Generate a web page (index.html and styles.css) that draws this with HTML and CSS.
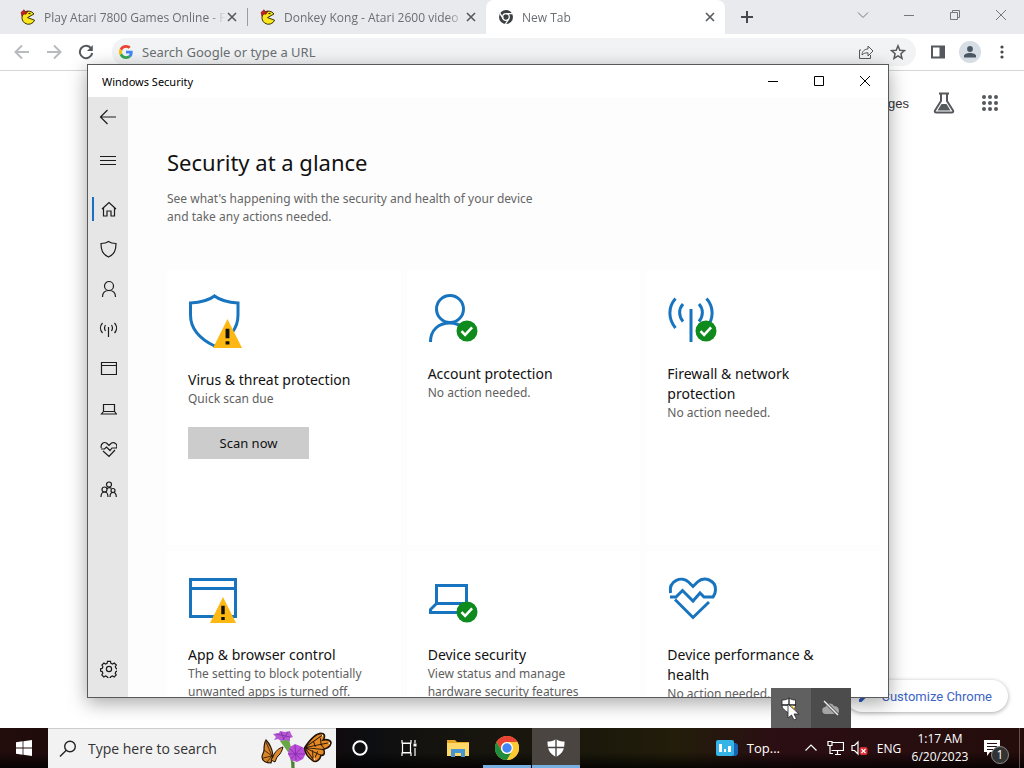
FILE: index.html
```html
<!DOCTYPE html>
<html lang="en">
<head>
<meta charset="utf-8">
<title>Windows Security</title>
<link rel="stylesheet" href="styles.css">
</head>
<body>
<svg class="defs" width="0" height="0" aria-hidden="true">
  <defs>
    <symbol id="pac" viewBox="0 0 16 16">
      <path d="M14 5 7.500 8.600 14.600 11.200A6.600 6.600 0 1 1 14 5Z" fill="#f8e71c" stroke="#3a3008" stroke-width="1"/>
      <path d="M1 3.500 4 .8 5.500 2.800 8 2 6 5.200 3.800 5 2 7.200Z" fill="#c3261c" stroke="#5c100b" stroke-width=".6"/>
      <path d="M8.500 4.500h2" stroke="#2b2508" stroke-width="1.300"/>
    </symbol>
    <symbol id="x" viewBox="0 0 10 10"><path d="M1 1 9 9M9 1 1 9" stroke="currentColor" stroke-width="1.600" fill="none"/></symbol>
    <symbol id="warn" viewBox="0 0 30 30">
      <path d="M15 0 30 30H0Z" fill="#fdb813"/><path d="M13 10h4v10h-4zM13 23h4v3.500h-4z" fill="#111"/>
    </symbol>
    <symbol id="ok" viewBox="0 0 22 22">
      <circle cx="11" cy="11" r="10.500" fill="#0f8a1c"/><path d="m5.500 11.200 3.600 3.600 7-7.400" fill="none" stroke="#fff" stroke-width="2.600"/>
    </symbol>
    <symbol id="wing" viewBox="0 0 26 30">
      <path d="M1 18C5 8 10 1 15 1c3 0 3 4 2 6 4-2 8-1 8 2 0 4-4 6-6 7 3 2 2 6-1 6 0 4-3 8-6 7C7 27 2 23 1 18Z" fill="#e58a23" stroke="#22140c" stroke-width="1.600"/>
      <path d="M1 18 15 3M1 18 22 9M1 18l18-2M1 18l17 4M1 18l11 10M8 10l3 5M14 6l2 6 4 3M9 19l2 7M14 19l-1 6" fill="none" stroke="#2a170d" stroke-width=".9"/>
      <path d="M15 3h1M23 9h1M12 27h1" stroke="#fff" stroke-width="1.400"/>
    </symbol>
  </defs>
</svg>

<div class="desktop">
  <section class="browser" aria-label="Browser">
    <div class="tabstrip">
      <div class="tab"><svg class="fav"><use href="#pac"/></svg><span class="tab-title">Play Atari 7800 Games Online - F</span><button class="tab-x" aria-label="Close tab"><svg><use href="#x"/></svg></button></div>
      <div class="tab divided"><svg class="fav"><use href="#pac"/></svg><span class="tab-title">Donkey Kong - Atari 2600 video</span><button class="tab-x" aria-label="Close tab"><svg><use href="#x"/></svg></button></div>
      <div class="tab active">
        <svg class="fav" viewBox="0 0 16 16"><circle cx="8" cy="8" r="7" fill="#3c4043"/><circle cx="8" cy="8" r="3.300" fill="#3c4043" stroke="#fff" stroke-width="1.300"/><path d="M8 4.700h6.800M5.100 9.600 2 4.300M10.900 9.600 7.500 15" stroke="#fff" stroke-width="1.300"/></svg>
        <span class="tab-title">New Tab</span><button class="tab-x" aria-label="Close tab"><svg><use href="#x"/></svg></button></div>
      <button class="new-tab" aria-label="New tab"><svg width="12" height="12" viewBox="0 0 12 12"><path d="M6 0v12M0 6h12" stroke="#45494d" stroke-width="2"/></svg></button>
      <div class="caption">
        <button aria-label="Search tabs"><svg width="12" height="12" viewBox="0 0 12 12"><path d="m1 3.500 5 5 5-5"/></svg></button>
        <button aria-label="Minimize"><svg width="12" height="12" viewBox="0 0 12 12"><path d="M1 6.500h10"/></svg></button>
        <button aria-label="Restore"><svg width="12" height="12" viewBox="0 0 12 12"><path d="M1.500 3.500h7v7h-7zM3.500 3.500v-2h7v7h-2"/></svg></button>
        <button aria-label="Close"><svg width="12" height="12" viewBox="0 0 12 12"><path d="m1 1 10 10M11 1 1 11"/></svg></button>
      </div>
    </div>
    <div class="toolbar">
      <button class="tool dim" aria-label="Back"><svg width="16" height="16" viewBox="0 0 16 16"><path d="M15 8H2M8 1.500 1.500 8 8 14.500"/></svg></button>
      <button class="tool dim" aria-label="Forward"><svg width="16" height="16" viewBox="0 0 16 16"><path d="M1 8h13M8 1.500 14.500 8 8 14.500"/></svg></button>
      <button class="tool" aria-label="Reload"><svg width="16" height="16" viewBox="0 0 16 16"><path d="M13.200 4.500A6.200 6.200 0 1 0 14.200 9"/><path d="M14.800 1v6H9Z" fill="currentColor" stroke="none"/></svg></button>
      <div class="omnibox">
        <svg width="14" height="14" viewBox="0 0 48 48" aria-hidden="true"><path fill="#EA4335" d="M24 9.500c3.540 0 6.710 1.220 9.210 3.600l6.850-6.850C35.900 2.380 30.470 0 24 0 14.620 0 6.510 5.380 2.560 13.220l7.980 6.190C12.430 13.720 17.740 9.500 24 9.500z"/><path fill="#4285F4" d="M46.980 24.550c0-1.570-.15-3.090-.38-4.550H24v9.020h12.940c-.58 2.960-2.260 5.480-4.780 7.180l7.730 6c4.510-4.180 7.090-10.360 7.090-17.650z"/><path fill="#FBBC05" d="M10.530 28.590c-.48-1.450-.76-2.990-.76-4.590s.27-3.140.76-4.590l-7.980-6.190C.92 16.460 0 20.120 0 24s.92 7.540 2.560 10.780l7.970-6.190z"/><path fill="#34A853" d="M24 48c6.480 0 11.930-2.130 15.890-5.810l-7.730-6c-2.150 1.450-4.920 2.300-8.160 2.300-6.260 0-11.570-4.220-13.470-9.910l-7.980 6.190C6.510 42.620 14.620 48 24 48z"/></svg>
        <input type="text" aria-label="Address bar" placeholder="Search Google or type a URL">
        <button class="tool" aria-label="Share"><svg class="thin" width="16" height="16" viewBox="0 0 16 16"><path d="M3 6H1.500v8.500h11V11M4 11c0-4 3-6 6-6V2l5 5-5 5V8.800c-3 0-4.500.6-6 2.200Z"/></svg></button>
        <button class="tool" aria-label="Bookmark"><svg class="star" width="16" height="16" viewBox="0 0 16 16"><path d="m8 1.800 1.800 4.400 4.700.4-3.600 3.100 1.100 4.600L8 11.800l-4 2.500 1.100-4.600L1.500 6.600l4.700-.4Z"/></svg></button>
      </div>
      <button class="tool" aria-label="Side panel"><svg width="16" height="16" viewBox="0 0 16 16"><path d="M2 2.500h12v11H2z"/><path d="M9.500 2h5v12h-5z" fill="currentColor" stroke="none"/></svg></button>
      <button class="avatar" aria-label="Profile"><svg width="14" height="14" viewBox="0 0 14 14"><circle cx="7" cy="4" r="2.900" fill="#4a5763"/><path d="M1 12.500v-1.700c0-1.900 3-2.900 6-2.900s6 1 6 2.900v1.700Z" fill="#4a5763"/></svg></button>
      <button class="tool" aria-label="Menu"><svg width="16" height="16" viewBox="0 0 16 16"><g fill="#45494d" stroke="none"><circle cx="8" cy="3" r="1.600"/><circle cx="8" cy="8" r="1.600"/><circle cx="8" cy="13" r="1.600"/></g></svg></button>
    </div>
    <div class="newtab-page">
      <header class="ntp-head">
        <a href="#images">Images</a>
        <button aria-label="Labs"><svg width="22" height="22" viewBox="0 0 22 22"><path d="M6 1.500h10M8 2v7L2 18.500c-.6 1.200 0 2 1.200 2h15.600c1.200 0 1.800-.8 1.200-2L14 9V2" fill="none" stroke="#55595d" stroke-width="2"/><path d="m8.500 12h5l4 6.500h-13Z" fill="#55595d"/></svg></button>
        <button aria-label="Google apps"><svg width="18" height="18" viewBox="0 0 18 18"><g fill="#55595d"><circle cx="3" cy="3" r="2"/><circle cx="9" cy="3" r="2"/><circle cx="15" cy="3" r="2"/><circle cx="3" cy="9" r="2"/><circle cx="9" cy="9" r="2"/><circle cx="15" cy="9" r="2"/><circle cx="3" cy="15" r="2"/><circle cx="9" cy="15" r="2"/><circle cx="15" cy="15" r="2"/></g></svg></button>
      </header>
      <button class="customize"><svg width="14" height="14" viewBox="0 0 14 14"><path d="M1 10.500 9 2.500l2.500 2.500-8 8H1ZM10 1.500l1-1 2.500 2.500-1 1Z" fill="#2f5bc4"/></svg>Customize Chrome</button>
    </div>
  </section>

  <section class="window" aria-label="Windows Security">
    <header class="titlebar">
      <span>Windows Security</span>
      <div class="win-buttons">
        <button aria-label="Minimize"><svg width="12" height="12" viewBox="0 0 12 12"><path d="M1 6.500h10"/></svg></button>
        <button aria-label="Maximize"><svg width="12" height="12" viewBox="0 0 12 12"><path d="M1.500 1.500h9v9h-9z"/></svg></button>
        <button aria-label="Close"><svg width="12" height="12" viewBox="0 0 12 12"><path d="m1 1 10 10M11 1 1 11"/></svg></button>
      </div>
    </header>
    <div class="win-body">
      <nav class="side" aria-label="Security areas">
        <button aria-label="Back"><svg viewBox="0 0 18 18"><path d="M17 9H1.500M8.500 2l-7 7 7 7"/></svg></button>
        <button class="menu" aria-label="Menu"><svg viewBox="0 0 18 18"><path d="M1 4.500h16M1 8.500h16M1 12.500h16"/></svg></button>
        <button class="current" aria-label="Home"><svg viewBox="0 0 18 18"><path d="m3 9 7-6.500L17 9M4.500 8v8H8v-5h4v5h3.500V8"/></svg></button>
        <button aria-label="Virus and threat protection"><svg viewBox="0 0 18 18"><path d="M9.500 1.500c2 1.500 4.500 2 7.500 2 0 7-1.500 10.500-7.500 13.500-6-3-7.500-6.500-7.500-13.500 3 0 5.500-.5 7.500-2Z"/></svg></button>
        <button aria-label="Account protection"><svg viewBox="0 0 18 18"><circle cx="10" cy="6" r="4.500"/><path d="M3.500 17c0-4.500 3-6.500 6.500-6.500s6.500 2 6.500 6.500"/></svg></button>
        <button aria-label="Firewall"><svg viewBox="0 0 18 18"><path d="M9.500 7v10M6.500 5c-1.300 2-1.300 4 0 6M3.500 3c-2.700 3-2.700 7 0 10M12.500 5c1.300 2 1.300 4 0 6M15.500 3c2.700 3 2.700 7 0 10"/></svg></button>
        <button aria-label="App and browser control"><svg viewBox="0 0 18 18"><path d="M2.500 2.500h15v12h-15zM2.500 5.500h15"/></svg></button>
        <button aria-label="Device security"><svg viewBox="0 0 18 18"><path d="M4.500 4.500h11v7h-11zM4.500 11.500l-2 2.500h15l-2-2.500"/></svg></button>
        <button aria-label="Device performance"><svg viewBox="0 0 18 18"><path d="M2.300 8C1.300 4 4.500 1.500 7.500 3L10 5.500 12.500 3c3-1.500 6.500 1.500 5 5H13l-2 2.500L7.500 7l-2 2H2M4 11l6 5.500L16 10"/></svg></button>
        <button aria-label="Family options"><svg viewBox="0 0 18 18"><circle cx="10" cy="4.500" r="2.500"/><circle cx="5.500" cy="9.500" r="2.500"/><circle cx="14" cy="10.500" r="2"/><path d="M2 17c0-3 1.500-5 3.500-5S9 14 9 17M11 17c0-2.500 1-4.500 3-4.500s3.300 2 3.300 4.500M8 9c1-1.500 3-2 4.500-.5"/></svg></button>
        <button class="gear" aria-label="Settings"><svg viewBox="0 0 18 18"><g transform="translate(1 0)"><circle cx="9" cy="9" r="2.600"/><path d="m7.500 1.300 3 0 .4 2 1.700.7L14.300 3l2 2-1 1.700.7 1.600 1.200.5v2.400l-1.400.5-.6 1.700 1 1.600-2 2-1.700-1-1.700.7-.5 1.500H7.700l-.5-1.600-1.700-.7-1.700 1-2-2 1-1.700-.6-1.600-1.600-.5V8.800l1.700-.5.6-1.600-1-1.700 2-2 1.600 1 1.600-.7Z"/></g></svg></button>
      </nav>
      <main class="main">
        <h1>Security at a glance</h1>
        <p class="intro">See what's happening with the security and health of your device and take any actions needed.</p>
        <div class="cards">
          <article class="card">
            <svg class="pic" width="56" height="54" viewBox="0 0 56 54"><path d="M26.500 2c6.500 5 14 6.500 23.500 7v12c0 14-9 24-23.500 31C12 45 2.500 35 2.500 21V9c9.500-.5 17.500-2 24-7Z" class="line"/><use href="#warn" x="25" y="25" width="29" height="29"/></svg>
            <h2>Virus &amp; threat protection</h2><p>Quick scan due</p>
            <button class="action">Scan now</button>
          </article>
          <article class="card">
            <svg class="pic" width="52" height="48" viewBox="0 0 52 48"><circle cx="22" cy="15" r="13.500" class="line"/><path d="M2.500 48c0-12 8-19 19.500-19 6 0 10 2 13 5" class="line"/><use href="#ok" x="28" y="26" width="22" height="22"/></svg>
            <h2>Account protection</h2><p>No action needed.</p>
          </article>
          <article class="card">
            <svg class="pic" width="52" height="48" viewBox="0 0 52 48"><path d="M24 15v33M8.500 4.500C1 13 1 25 8.500 34M16 10c-4.500 5-4.500 12 0 17.500M39.500 4.500C47 13 47 25 39.500 34M32 10c4.500 5 4.500 12 0 17.500" class="line"/><use href="#ok" x="28" y="26" width="22" height="22"/></svg>
            <h2>Firewall &amp; network protection</h2><p>No action needed.</p>
          </article>
          <article class="card">
            <svg class="pic" width="52" height="48" viewBox="0 0 52 48"><path d="M2.500 4.500h45v37h-45zM2.500 13.500h45" class="line"/><use href="#warn" x="22" y="22" width="26" height="26"/></svg>
            <h2>App &amp; browser control</h2><p>The setting to block potentially unwanted apps is turned off.</p>
          </article>
          <article class="card">
            <svg class="pic" width="52" height="48" viewBox="0 0 52 48"><path d="M8.500 10.500h30v18h-30zM8.500 28.500l-6 6v3H38V28.500" class="line"/><use href="#ok" x="28" y="26" width="22" height="22"/></svg>
            <h2>Device security</h2><p>View status and manage hardware security features</p>
          </article>
          <article class="card">
            <svg class="pic" width="52" height="48" viewBox="0 0 52 48"><path d="M3.500 18C1.500 5 15 1 21.500 7L26 11.500 30.500 7C37 1 49 5 48.500 15c0 3-1 5-2.500 7H37l-4-4-7 8L15.500 15.500 9 22H3M8 24.500l18 18L42 27" class="line"/></svg>
            <h2>Device performance &amp; health</h2><p>No action needed.</p>
          </article>
        </div>
      </main>
    </div>
  </section>

  <div class="tray-popup">
    <button class="hover" aria-label="Windows Security"><svg width="26" height="26" viewBox="0 0 22 26"><path d="M9 3c2 1.500 4 2 6.500 2v5c0 4-3 6-6.500 8-3.500-2-7-4-7-8V5c3 0 5-.5 7-2Z" fill="#fff" stroke="#222" stroke-width=".8"/><path d="M9 3v15M2 10h14" stroke="#222" stroke-width="1.300"/><path d="m12 10 4 6h-6Z" fill="#f5cc1b"/><path d="M8 9v14l3.500-3 2.500 5 2.500-1.200L14 19h5Z" fill="#fff" stroke="#222" stroke-width=".8"/></svg></button>
    <button aria-label="OneDrive"><svg width="18" height="16" viewBox="0 0 18 16"><path d="M4 14a3.500 3.500 0 0 1-.5-7C4 3 10 2 12 6c4 0 5 3 5 5s-1 3-3 3Z" fill="#a5a5a5"/><path d="m2 1 14 14" stroke="#4c4c4c" stroke-width="3"/><path d="m2 1 14 14" stroke="#eee" stroke-width="1.400"/></svg></button>
  </div>

  <footer class="taskbar">
    <button class="start" aria-label="Start"><svg width="16" height="16" viewBox="0 0 16 16"><path d="M0 2.300 6.600 1.300v6.300H0ZM7.400 1.200 16 0v7.600H7.400ZM0 8.400h6.600v6.300L0 13.700ZM7.400 8.400H16V16l-8.600-1.200Z" fill="#fff"/></svg></button>
    <label class="search">
      <svg width="18" height="18" viewBox="0 0 18 18"><circle cx="11" cy="6.500" r="5.300" fill="none" stroke="#222" stroke-width="1.400"/><path d="M7.300 10.300 1 16.600" stroke="#222" stroke-width="1.400"/></svg>
      <input type="text" aria-label="Search" placeholder="Type here to search">
      <svg class="butterfly" width="74" height="38" viewBox="0 0 74 38">
        <path d="M24 14c5 5 7 12 8 24" fill="none" stroke="#5c9440" stroke-width="2.500"/>
        <path d="m19 11 9-2 2 9-3 4Z" fill="#69a646"/>
        <path d="m12 4 6-1 1-2 5 1 5-1 1 3 2 3-3 1 0 3-5-1-4 1-3-2-4 1 2-3Z" fill="#b558d3"/>
        <path d="m15 4 14 3M20 2l3 8M27 2l-5 8" stroke="#7c2ca5" stroke-width=".8"/>
        <path d="m29 17 5-3 5 2 4 2 2 5-3 6-6 3-6-2-3-6Z" fill="#b94fd6"/>
        <path d="m29 19 11 10M34 15l1 15M41 17 30 29M27 24h17" stroke="#7f2ba6" stroke-width=".8"/>
        <path d="M32 32v6" stroke="#4b8234" stroke-width="3"/>
        <g transform="rotate(12 58 17)"><use href="#wing" x="43" y="2" width="27" height="31"/></g>
        <path d="M5 10c4 4 6 9 7 15l-2 8C5 33 1 31 1 27c0-3 2-4 2-7 0-4 0-7 2-10Z" fill="#d98529" stroke="#25160c" stroke-width="1.200"/>
        <path d="M5 12 11 26M3 20l8 6M2 28l9-2M6 32l5-6" stroke="#2a170d" stroke-width=".8"/>
        <path d="M12 27c2-6 6-9 10-10-1 4-3 8-6 10l-2 5-4-2Z" fill="#dc8a2e" stroke="#25160c"/>
      </svg>
    </label>
    <div class="apps">
      <button aria-label="Cortana"><svg width="18" height="18" viewBox="0 0 18 18"><circle cx="9" cy="9" r="6.700" fill="none" stroke="#fff" stroke-width="2"/></svg></button>
      <button aria-label="Task view"><svg width="18" height="18" viewBox="0 0 18 18"><path d="M2 1v3h9V1M2 17v-3h9v3M2.500 4.500h8v9h-8zM15 1v3M15 9v8" fill="none" stroke="#fff" stroke-width="1.200"/><path d="M13.500 4.500h3v3h-3z" fill="#fff"/></svg></button>
      <button aria-label="File Explorer"><svg width="22" height="18" viewBox="0 0 22 18"><path d="M0 1h8l2 2h12v14H0Z" fill="#e8a827"/><path d="M0 4h22v13H0Z" fill="#ffd867"/><path d="M4 10h14v8h-4v-4H8v4H4Z" fill="#4796d1"/></svg></button>
      <button class="open" aria-label="Chrome"><svg width="24" height="24" viewBox="0 0 24 24"><circle cx="12" cy="12" r="12" fill="#fcc934"/><path d="M1.600 6A12 12 0 0 1 22.400 6H12a6 6 0 0 0-5.200 9Z" fill="#ea4335"/><path d="M1.600 6A12 12 0 0 0 12 24l5.200-9A6 6 0 0 1 6.800 15Z" fill="#1e8e3e"/><path d="M22.400 6A12 12 0 0 1 12 24l5.200-9A6 6 0 0 0 12 6Z" fill="#fcc934"/><circle cx="12" cy="12" r="6" fill="#fff"/><circle cx="12" cy="12" r="4.700" fill="#4285f4"/></svg></button>
      <button class="open focus" aria-label="Windows Security"><svg width="18" height="18" viewBox="0 0 18 18"><path d="M9 0c2.500 2 5 2.600 8.500 2.600C17.500 10 16 14.500 9 18 2 14.500.5 10 .5 2.600 4 2.600 6.500 2 9 0Z" fill="#fff"/><path d="M9 0v18M0 8.500h18" stroke="#4a4540" stroke-width="1.400"/></svg></button>
    </div>
    <div class="tray">
      <button class="news"><svg width="22" height="18" viewBox="0 0 22 18"><path d="M17 4h3l2 2v9l-2 2h-3Z" fill="#1665b5"/><rect y="1" width="18" height="16" rx="2" fill="#35b4e8"/><path d="M3 5h3v8H3zM8 10h2v3H8zM12 7h3v6h-3z" fill="#fff"/></svg><span>Top...</span></button>
      <button aria-label="Show hidden icons"><svg width="14" height="14" viewBox="0 0 14 14"><path d="m1.500 9.500 5.500-5.500 5.500 5.500"/></svg></button>
      <button aria-label="Network"><svg width="17" height="16" viewBox="0 0 17 16"><path d="M4.500 2.500h12v8h-12M8 14.500h6M10.500 10.500v4M1 1.500h4v4H1zM3 5.500v8h3"/></svg></button>
      <button aria-label="Volume muted"><svg width="17" height="16" viewBox="0 0 17 16"><path d="M1 5.500h2.500L7 2v12l-3.500-3.500H1Z"/><rect x="8.500" y="7" width="8" height="8" rx="2" fill="#d92b35" stroke="none"/><path d="m10.500 9 4 4M14.500 9l-4 4"/></svg></button>
      <button class="lang">ENG</button>
      <button class="clock"><span>1:17 AM</span><span>6/20/2023</span></button>
      <button class="notes" aria-label="1 new notification"><svg width="16" height="16" viewBox="0 0 16 16"><path d="M0 0h16v12H6l-3 4v-4H0Z" fill="#fff" stroke="none"/><path d="M3 3.500h10M3 6.500h10M3 9.500h6" stroke="#25100f"/></svg><span class="badge">1</span></button>
    </div>
  </footer>
</div>
</body>
</html>
```
FILE: styles.css
```css
* { box-sizing: border-box; }
body { margin: 0; font-family: "Noto Sans", "Open Sans", sans-serif; font-size: 12px; color: #111; }
button { border: 0; padding: 0; background: none; font: inherit; color: inherit; display: flex; align-items: center; justify-content: center; }
input { border: 0; padding: 0; background: none; font: inherit; min-width: 0; outline: 0; }
h1, h2, p { margin: 0; font-weight: 400; }
svg { flex: none; display: block; }
.defs { position: absolute; }
.desktop { position: relative; display: flex; flex-direction: column; height: 100vh; overflow: hidden; }

.browser { flex: 1; display: flex; flex-direction: column; background: #fff; }
.tabstrip { display: flex; height: 34px; padding-left: 8px; background: #e8eaed; font-family: "Open Sans", sans-serif; }
.tab { flex: 0 1 239px; display: flex; align-items: center; padding: 0 9px 0 12px; color: #6a6e73; min-width: 0; }
.divided { border-left: 1px solid #9a9da1; border-image: linear-gradient(transparent 24%, #9a9da1 24%, #9a9da1 76%, transparent 76%) 1; }
.tab.active { background: #fff; border-radius: 8px 8px 0 0; }
.fav { width: 16px; height: 16px; margin-right: 8px; }
.tab-title { flex: 1; overflow: hidden; white-space: nowrap; mask-image: linear-gradient(90deg, #000 90%, transparent); }
.tab-x { width: 12px; color: #55595d; }
.tab-x svg { width: 10px; height: 10px; }
.new-tab { width: 44px; }
.caption { display: flex; margin-left: auto; padding-bottom: 5px; }
.caption button { width: 46px; }
.caption svg, .win-buttons svg { fill: none; stroke: #777; }
.toolbar { display: flex; align-items: center; gap: 4px; height: 37px; padding: 0 8px; border-bottom: 1px solid #d5d6d8; }
.tool { width: 28px; height: 28px; color: #55595d; }
.tool svg { fill: none; stroke: currentColor; stroke-width: 2; }
.tool .thin { stroke-width: 1; }
.tool .star { stroke-width: 1.5; }
.dim { color: #b8babd; }
.omnibox { flex: 1; display: flex; align-items: center; gap: 4px; height: 28px; margin: 0 4px 0 8px; padding: 0 4px 0 7px; border-radius: 14px; background: #f1f3f4; font-size: 13px; }
.omnibox input { flex: 1; margin-left: 5px; }
.omnibox input::placeholder { color: #6b6f73; opacity: 1; }
.avatar { border-radius: 50%; background: #d6dde4; width: 22px; height: 22px; margin: 0 3px; }
.newtab-page { position: relative; flex: 1; }
.ntp-head { display: flex; justify-content: flex-end; align-items: center; gap: 24px; height: 64px; padding-right: 23px; }
.ntp-head a { color: #333; text-decoration: none; font-family: "Liberation Sans", Arial, sans-serif; font-size: 13px; }
.ntp-head button { min-width: 22px; }
.customize { position: absolute; right: 16px; bottom: 16px; height: 32px; gap: 9px; padding: 0 16px 0 12px; border-radius: 16px; background: #fff; color: #3c64c4; font-family: Roboto, sans-serif; font-size: 13px; box-shadow: 0 1px 4px rgba(0, 0, 0, .35); }

.window { position: absolute; left: 87px; top: 64px; right: 135px; bottom: 70px; display: flex; flex-direction: column; border: 1px solid #58595b; background: #fff; box-shadow: 0 5px 18px rgba(0, 0, 0, .35); }
.titlebar { display: flex; align-items: center; justify-content: space-between; height: 32px; padding-left: 14px; font-size: 11px; color: #000; }
.win-buttons { display: flex; height: 32px; }
.win-buttons button { width: 46px; }
.win-buttons svg { stroke: #000; }
.win-body { flex: 1; display: flex; min-height: 0; overflow: hidden; }
.side { width: 40px; display: flex; flex-direction: column; padding-bottom: 8px; background: #e6e6e6; }
.side button { height: 40px; width: 100%; }
.side svg { width: 18px; height: 18px; fill: none; stroke: #1c1c1c; stroke-width: 1.2; }
.side .menu { margin: 4px 0 8px; }
.side .current { background: linear-gradient(#1a6fc0, #1a6fc0) 4px center / 2px 24px no-repeat; }
.side .gear { margin-top: auto; }
.main { flex: 1; padding: 49px 8px 0 39px; background: #fdfdfd; overflow: hidden; }
h1 { font-size: 22px; line-height: 32px; }
.intro { max-width: 380px; margin-top: 12px; font-size: 12px; line-height: 18px; color: #666; }
.cards { display: grid; grid-template-columns: repeat(3, 1fr); grid-auto-rows: 275px; gap: 6px; margin-top: 44px; }
.card { padding: 24px 20px 0 21px; background: #fff; }
.pic { margin-bottom: 22px; }
.line { fill: none; stroke: #1874bf; stroke-width: 3; }
h2 { max-width: 176px; font-size: 14px; line-height: 20px; }
.card p { font-size: 12px; line-height: 18px; color: #606060; }
.action { width: 121px; height: 32px; margin-top: 19px; background: #ccc; font-size: 13px; }

.tray-popup { position: absolute; right: 173px; bottom: 40px; display: flex; background: #4c4c4c; }
.tray-popup button { width: 40px; height: 40px; }
.tray-popup .hover { background: #606060; }

.taskbar { display: flex; height: 40px; color: #fff; background: linear-gradient(transparent 60%, rgba(0, 0, 0, .8)), linear-gradient(90deg, #220c0c 0, #140808 30%, #0d0e12 36%, #15130f 42%, #1b190b 58%, #231d0a 66%, #2b0e14 76%, #240d0b 100%); font-family: "Open Sans", sans-serif; }
.start { width: 48px; }
.search { flex: 0 1 288px; display: flex; align-items: center; padding-left: 11px; background: #f2f2f2; border-top: 1px solid #ccc; min-width: 0; }
.search input { flex: 1; margin-left: 11px; font-size: 14px; }
.search input::placeholder { color: #333; opacity: 1; }
.butterfly { margin-right: 1px; }
.apps { display: flex; gap: 1px; }
.apps button { width: 48px; border-bottom: 3px solid transparent; border-top: 3px solid transparent; }
.apps .open { border-bottom-color: #76b0e3; }
.apps .focus { background: #4a4540; border-top-color: #4a4540; }
.tray { display: flex; margin-left: auto; padding-right: 4px; }
.tray svg { fill: none; stroke: #fff; stroke-width: 1.2; }
.tray button { width: 24px; }
.tray .news { width: auto; gap: 9px; margin-right: 19px; font-size: 13px; }
.tray .news svg { stroke: none; }
.tray .lang { width: 36px; }
.tray .clock { width: 66px; flex-direction: column; line-height: 18px; font-size: 12px; }
.tray .notes { position: relative; width: 47px; padding-right: 8px; border-right: 1px solid #65504f; }
.badge { position: absolute; left: 18px; top: 18px; width: 18px; height: 18px; border: 1px solid #888; border-radius: 50%; background: #333; font-size: 12px; line-height: 16px; text-align: center; }
```
